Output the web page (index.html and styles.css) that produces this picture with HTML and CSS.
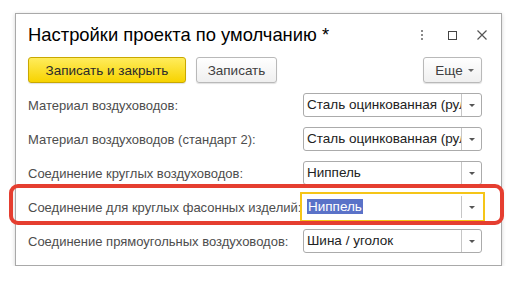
FILE: index.html
```html
<!DOCTYPE html>
<html lang="ru">
<head>
	<meta charset="UTF-8">
	<title>Настройки проекта по умолчанию</title>
	<link rel="stylesheet" href="styles.css">
</head>
<body>
	<div class="page">
		<div class="window">
			<div class="titlebar">
				<h1 class="title">Настройки проекта по умолчанию *</h1>
				<div class="win-icons">
					<span class="ico-dots"><i></i><i></i><i></i></span>
					<span class="ico-max"></span>
					<svg class="ico-close" width="10" height="10" viewBox="0 0 10 10">
						<path d="M0.5 0.5L9.5 9.5M9.5 0.5L0.5 9.5" stroke="#555" stroke-width="1.2" fill="none"/>
					</svg>
				</div>
			</div>

			<div class="toolbar">
				<button class="btn btn-default">Записать и закрыть</button>
				<button class="btn">Записать</button>
				<button class="btn btn-more">Еще <span class="caret"></span></button>
			</div>

			<div class="form">
				<div class="row">
					<label>Материал воздуховодов:</label>
					<div class="field"><span class="value">Сталь оцинкованная (рулон)</span><span class="drop"></span></div>
				</div>
				<div class="row">
					<label>Материал воздуховодов (стандарт 2):</label>
					<div class="field"><span class="value">Сталь оцинкованная (рулон)</span><span class="drop"></span></div>
				</div>
				<div class="row">
					<label>Соединение круглых воздуховодов:</label>
					<div class="field"><span class="value">Ниппель</span><span class="drop"></span></div>
				</div>
				<div class="row row-marked">
					<label>Соединение для круглых фасонных изделий:</label>
					<div class="field focused"><span class="value"><span class="sel">Ниппель</span></span><span class="drop"></span></div>
					<div class="mark"></div>
				</div>
				<div class="row">
					<label>Соединение прямоугольных воздуховодов:</label>
					<div class="field"><span class="value">Шина / уголок</span><span class="drop"></span></div>
				</div>
			</div>
		</div>
	</div>
</body>
</html>
```

FILE: styles.css
```css
*{
	margin: 0;
	padding: 0;
	box-sizing: border-box;
}
body{
	background: #fff;
	font-family: "Liberation Sans", Arial, sans-serif;
	font-size: 13px;
	color: #333;
}
.page{
	padding: 13px 0 0 15px;
}
.window{
	width: 487px;
	height: 253px;
	border: 1px solid #a9a9a9;
	background: #fff;
	box-shadow: 0 1px 4px rgba(0,0,0,.18);
	padding: 10px 19px 0 12px;
}
/*заголовок окна*/
.titlebar{
	display: flex;
	align-items: center;
	height: 22px;
	margin-right: -5px;
}
.title{
	flex: 1;
	font-size: 18.4px;
	font-weight: normal;
	line-height: 22px;
	color: #000;
}
.win-icons{
	display: flex;
	align-items: center;
}
.ico-dots{
	display: flex;
	flex-direction: column;
	gap: 2px;
	margin-right: 25px;
}
.ico-dots i{
	display: block;
	width: 2px;
	height: 2px;
	background: #8a8a8a;
}
.ico-max{
	width: 9px;
	height: 9px;
	border: 1px solid #444;
	margin-right: 20px;
}
.ico-close{
	display: block;
}
/*кнопки*/
.toolbar{
	display: flex;
	margin-top: 11px;
	gap: 10px;
}
.btn{
	height: 26px;
	font-family: inherit;
	font-size: 13.5px;
	color: #404040;
	border: 1px solid #b9b9b9;
	border-radius: 3px;
	background: linear-gradient(#fff, #efefef);
	box-shadow: 0 1px 1px rgba(0,0,0,.12);
	padding: 0;
}
.btn-default{
	width: 158px;
	color: #2b2b2b;
	border-color: #c9a800;
	background: linear-gradient(#ffec5c, #f7d300);
}
.btn + .btn{
	width: 81px;
}
.btn-more{
	margin-left: auto;
	width: 59px !important;
	display: flex;
	align-items: center;
	justify-content: center;
	gap: 5px;
	padding-left: 4px;
}
.caret{
	width: 0;
	height: 0;
	border-left: 3px solid transparent;
	border-right: 3px solid transparent;
	border-top: 3px solid #666;
	margin-top: 1px;
}
/*форма*/
.form{
	display: flex;
	flex-direction: column;
	gap: 10px;
	margin-top: 10px;
}
.row{
	display: grid;
	grid-template-columns: 275px 179px;
	align-items: center;
	height: 24px;
	position: relative;
}
.row label{
	color: #4d4d4d;
	white-space: nowrap;
}
.field{
	display: flex;
	height: 24px;
	border: 1px solid #ababab;
	border-radius: 3px;
	background: #fff;
}
.field .value{
	flex: 1;
	overflow: hidden;
	white-space: nowrap;
	padding-left: 3px;
	line-height: 22px;
	color: #222;
	font-size: 13.5px;
}
.drop{
	width: 20px;
	border-left: 1px solid #c6c6c6;
	display: flex;
	align-items: center;
	justify-content: center;
}
.drop::after{
	content: "";
	border-left: 3px solid transparent;
	border-right: 3px solid transparent;
	border-top: 3px solid #555;
}
.field.focused{
	border-color: #fff;
	outline: 2px solid #f5c518;
	outline-offset: 1px;
	border-radius: 0;
}
.sel{
	background: #5a72c8;
	color: #fff;
	display: inline-block;
	line-height: 15px;
	padding: 0 1px;
}
/*красная рамка поверх строки*/
.mark{
	position: absolute;
	left: -19px;
	right: -22px;
	top: -11px;
	bottom: -6px;
	border: 4px solid #e53e30;
	border-radius: 9px;
	pointer-events: none;
}
```
